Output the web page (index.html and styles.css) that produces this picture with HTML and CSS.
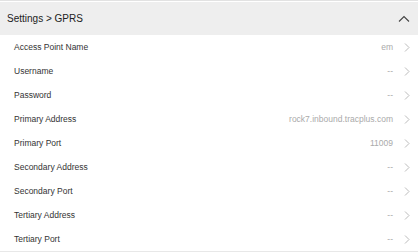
FILE: index.html
```html
<!DOCTYPE html>
<html>
<head>
<meta charset="utf-8">
<link rel="stylesheet" href="styles.css">
</head>
<body>
<div class="panel">
  <div class="header">
    <span class="title">Settings &gt; GPRS</span>
    <svg class="caret" width="12" height="8" viewBox="0 0 12 8"><path d="M1 6.5 L6 1.5 L11 6.5" fill="none" stroke="#444" stroke-width="1.1"/></svg>
  </div>
  <div class="list">
    <div class="row"><span class="label">Access Point Name</span><span class="value">em</span><svg class="chev" width="6" height="9" viewBox="0 0 6 9"><path d="M1 0.5 L5 4.5 L1 8.5" fill="none" stroke="#bbb" stroke-width="1"/></svg></div>
    <div class="row"><span class="label">Username</span><span class="value">--</span><svg class="chev" width="6" height="9" viewBox="0 0 6 9"><path d="M1 0.5 L5 4.5 L1 8.5" fill="none" stroke="#bbb" stroke-width="1"/></svg></div>
    <div class="row"><span class="label">Password</span><span class="value">--</span><svg class="chev" width="6" height="9" viewBox="0 0 6 9"><path d="M1 0.5 L5 4.5 L1 8.5" fill="none" stroke="#bbb" stroke-width="1"/></svg></div>
    <div class="row"><span class="label">Primary Address</span><span class="value">rock7.inbound.tracplus.com</span><svg class="chev" width="6" height="9" viewBox="0 0 6 9"><path d="M1 0.5 L5 4.5 L1 8.5" fill="none" stroke="#bbb" stroke-width="1"/></svg></div>
    <div class="row"><span class="label">Primary Port</span><span class="value">11009</span><svg class="chev" width="6" height="9" viewBox="0 0 6 9"><path d="M1 0.5 L5 4.5 L1 8.5" fill="none" stroke="#bbb" stroke-width="1"/></svg></div>
    <div class="row"><span class="label">Secondary Address</span><span class="value">--</span><svg class="chev" width="6" height="9" viewBox="0 0 6 9"><path d="M1 0.5 L5 4.5 L1 8.5" fill="none" stroke="#bbb" stroke-width="1"/></svg></div>
    <div class="row"><span class="label">Secondary Port</span><span class="value">--</span><svg class="chev" width="6" height="9" viewBox="0 0 6 9"><path d="M1 0.5 L5 4.5 L1 8.5" fill="none" stroke="#bbb" stroke-width="1"/></svg></div>
    <div class="row"><span class="label">Tertiary Address</span><span class="value">--</span><svg class="chev" width="6" height="9" viewBox="0 0 6 9"><path d="M1 0.5 L5 4.5 L1 8.5" fill="none" stroke="#bbb" stroke-width="1"/></svg></div>
    <div class="row"><span class="label">Tertiary Port</span><span class="value">--</span><svg class="chev" width="6" height="9" viewBox="0 0 6 9"><path d="M1 0.5 L5 4.5 L1 8.5" fill="none" stroke="#bbb" stroke-width="1"/></svg></div>
  </div>
</div>
</body>
</html>
```
FILE: styles.css
```css
html, body {
  margin: 0;
  padding: 0;
  background: #fff;
  font-family: "Liberation Sans", Arial, sans-serif;
}
.panel {
  width: 418px;
  border-top: 1px solid #e2e2e2;
  border-bottom: 1px solid #e8e8e8;
  padding-top: 1px;
}
.header {
  height: 33px;
  background: #eeeeee;
  display: flex;
  align-items: center;
  justify-content: space-between;
  padding: 0 8px 0 7px;
}
.title {
  font-size: 10px;
  color: #222;
}
.caret {
  display: block;
}
.row {
  height: 24px;
  display: flex;
  align-items: center;
  padding: 0 8px 0 14px;
}
.label {
  font-size: 8.5px;
  color: #333;
  flex: 1;
}
.value {
  font-size: 8.5px;
  color: #aaa;
  margin-right: 11px;
}
.chev {
  display: block;
}
```
